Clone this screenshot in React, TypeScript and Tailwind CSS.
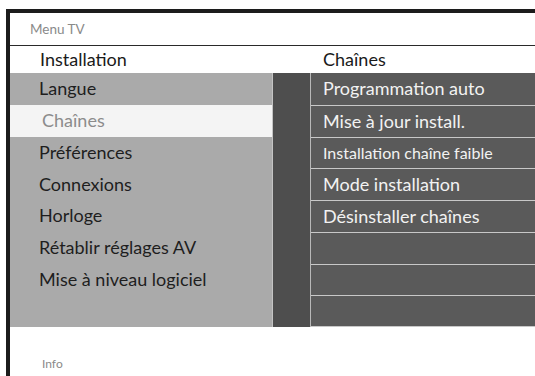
import React from "react";

const leftItems = [
  "Langue",
  "Chaînes",
  "Préférences",
  "Connexions",
  "Horloge",
  "Rétablir réglages AV",
  "Mise à niveau logiciel",
  "",
];

const rightItems = [
  { t: "Programmation auto", cls: "text-[18px]" },
  { t: "Mise à jour install.", cls: "text-[18px]" },
  { t: "Installation chaîne faible", cls: "text-[16px]" },
  { t: "Mode installation", cls: "text-[18px]" },
  { t: "Désinstaller chaînes", cls: "text-[18px]" },
  { t: "", cls: "" },
  { t: "", cls: "" },
  { t: "", cls: "" },
];

export default function App() {
  return (
    <div
      className="w-[535px] h-[376px] bg-white overflow-hidden pl-[6px] pt-[9px]"
      style={{ fontFamily: "Lato, 'Open Sans', sans-serif" }}
    >
      <div className="h-[367px] border-l-4 border-t-4 border-[#1c1c1c] flex flex-col">
        <div className="h-[33px] border-b border-[#2a2a2a] flex items-center pl-[20px] text-[13.5px] text-[#8a8a8a]">
          Menu TV
        </div>
        <div className="h-[27px] flex items-center text-[18px] text-[#1a1a1a]">
          <div className="w-[301px] pl-[30px]">Installation</div>
          <div className="pl-[12px]">Chaînes</div>
        </div>
        <div className="h-[254px] flex">
          <div className="w-[263px] bg-[#aaaaaa] flex flex-col border-r border-[#c4c4c4]">
            {leftItems.map((t, i) => (
              <div
                key={i}
                className={
                  "h-[31.75px] flex items-center text-[18px] " +
                  (i === 1
                    ? "bg-[#f4f4f4] pl-[32px] text-[#8c8c8c]"
                    : "pl-[29px] text-[#1e1e1e]")
                }
              >
                {t}
              </div>
            ))}
          </div>
          <div className="w-[37px] bg-[#4e4e4e]" />
          <div className="flex-1 bg-[#5a5a5a] flex flex-col border-l border-[#b8b8b8]">
            {rightItems.map((r, i) => (
              <div
                key={i}
                className={
                  "h-[31.75px] flex items-center pl-[12px] text-[#f2f2f2] " +
                  r.cls +
                  (i > 0 ? " border-t border-[#c8c8c8]" : "") +
                  (i === 7 ? " border-b border-[#c8c8c8]" : "")
                }
              >
                {r.t}
              </div>
            ))}
          </div>
        </div>
        <div className="flex-1 flex items-end pb-[3px] pl-[32px] text-[12px] text-[#8a8a8a]">
          Info
        </div>
      </div>
    </div>
  );
}
